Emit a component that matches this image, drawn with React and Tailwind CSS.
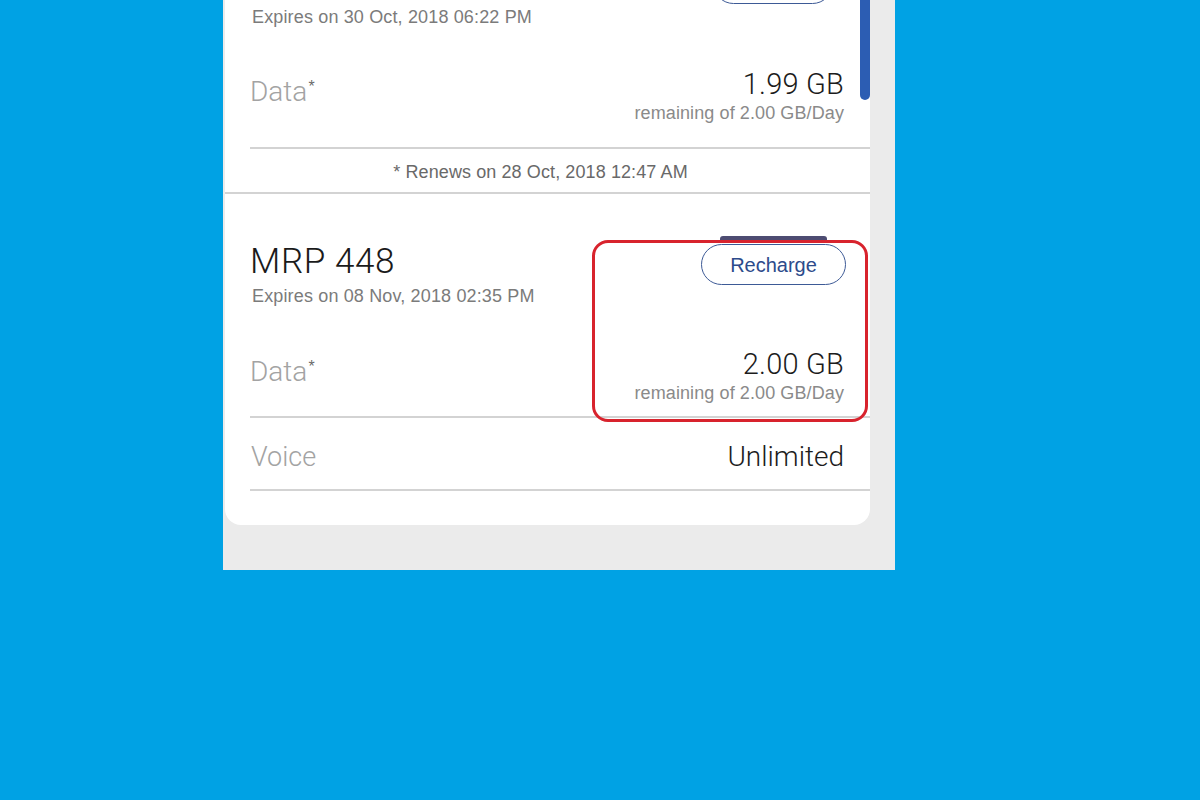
export default function App() {
  const big = "font-[Roboto,'Liberation_Sans',sans-serif] font-light";
  const Star = () => (
    <span className="font-['Liberation_Sans',Arial,sans-serif] font-normal text-[16px] leading-[22px] align-top text-[#6a6a6a] ml-[1px]">*</span>
  );
  const DataRow = ({ value, className }) => (
    <div className={"flex justify-between items-start pr-[26px] " + className}>
      <div className={big + " mt-[8px] text-[28px] leading-[32px] text-[#a3a3a3] h-[32px]"}>
        Data
        <Star />
      </div>
      <div className="flex flex-col items-end">
        <div className={big + " text-[29px] leading-[32px] tracking-[0.2px] text-[#1c1c1c]"}>{value}</div>
        <div className="mt-[2px] text-[18px] leading-[22px] tracking-[0.1px] text-[#8a8a8a]">remaining of 2.00 GB/Day</div>
      </div>
    </div>
  );

  return (
    <div className="w-[1200px] h-[800px] bg-[#00a2e4] overflow-hidden font-['Liberation_Sans',Arial,sans-serif]">
      <div className="relative ml-[223px] w-[672px] h-[570px] bg-[#ebebeb] overflow-hidden">
        <div className="ml-[2px] w-[645px] h-[525px] bg-white rounded-b-[16px] flex flex-col">
          {/* first plan (scrolled, partially visible) */}
          <div className="ml-[25px] flex flex-col">
            <div className="self-end mr-[37px] -mt-[37px] w-[120px] h-[41px] rounded-full border border-[#3d5a96]" />
            <div className="mt-[2px] pl-[2px] text-[18px] leading-[22px] tracking-[0.15px] text-[#7b7b7b]">
              Expires on 30 Oct, 2018 06:22 PM
            </div>
            <DataRow value="1.99 GB" className="mt-[40px]" />
            <div className="mt-[23px] h-[2px] bg-[#d3d3d3]" />
            <div className="mt-[12px] pr-[39px] text-center text-[18px] leading-[22px] tracking-[0.1px] text-[#696969]">
              * Renews on 28 Oct, 2018 12:47 AM
            </div>
          </div>
          <div className="mt-[9px] h-[2px] bg-[#d3d3d3]" />

          {/* second plan */}
          <div className="ml-[25px] flex flex-col">
            <div className="mt-[48px] flex justify-between items-start pr-[24px]">
              <div className="flex flex-col">
                <div className={big + " text-[35px] leading-[40px] tracking-[0.6px] text-[#1a1a1a]"}>MRP 448</div>
                <div className="mt-[3px] pl-[2px] text-[18px] leading-[22px] tracking-[0.15px] text-[#7b7b7b]">
                  Expires on 08 Nov, 2018 02:35 PM
                </div>
              </div>
              <button className="mt-[2px] w-[145px] h-[41px] rounded-full border border-[#3d5a96] bg-white text-[20px] leading-[36px] text-[#2d4b8b] text-center">
                Recharge
              </button>
            </div>
            <DataRow value="2.00 GB" className="mt-[41px]" />
            <div className="mt-[12px] h-[2px] bg-[#d3d3d3]" />
            <div className="mt-[23px] flex justify-between items-start pr-[26px]">
              <div className={big + " pl-[1px] text-[27px] leading-[32px] text-[#a3a3a3]"}>Voice</div>
              <div className={big + " text-[28px] leading-[32px] text-[#1c1c1c]"}>Unlimited</div>
            </div>
            <div className="mt-[16px] h-[2px] bg-[#d3d3d3]" />
          </div>
        </div>

        {/* scrollbar */}
        <div className="absolute left-[637px] top-0 w-[10px] h-[100px] rounded-b-full bg-[#2c5db3]" />
        {/* shadow bar above recharge */}
        <div className="absolute left-[497px] top-[236px] w-[107px] h-[4px] rounded-t-[3px] bg-[#4d4c72]" />
        {/* highlight box */}
        <div className="absolute left-[369px] top-[240px] w-[276px] h-[182px] rounded-[16px] border-[3px] border-[#d8232d]" />
      </div>
    </div>
  );
}
